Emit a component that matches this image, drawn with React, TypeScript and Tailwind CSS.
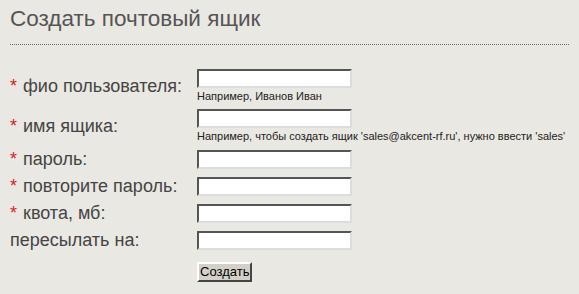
const font = { fontFamily: '"Liberation Sans", Tahoma, Arial, sans-serif' }

function Row({ label, req, hint }: { label: string; req?: boolean; hint?: string }) {
  return (
    <div className={`flex items-center ${hint ? 'mb-[6px]' : 'mb-[7px]'}`}>
      <div className="w-[187px] shrink-0 text-[18px] leading-[20px] text-[#444] whitespace-nowrap">
        {req && <span className="text-[#d22] mr-[6px]">*</span>}
        {label}
      </div>
      <div>
        <input
          type="text"
          className="block w-[155px] h-[19px] bg-white border-2 border-t-[#555] border-l-[#555] border-b-[#ddd] border-r-[#ddd] outline-none"
        />
        {hint && <div className="text-[11px] leading-[13px] mt-[2px] text-[#222] whitespace-nowrap">{hint}</div>}
      </div>
    </div>
  )
}

export default function App() {
  return (
    <div className="w-[579px] h-[294px] bg-[#eae8e3] px-[10px] pt-[5px] overflow-hidden" style={font}>
      <h1 className="text-[22.5px] text-[#555] leading-[28px]">Создать почтовый ящик</h1>
      <div className="border-b border-dotted border-[#666] mt-[11px] mb-[24px]" />
      <Row label="фио пользователя:" req hint="Например, Иванов Иван" />
      <Row label="имя ящика:" req hint="Например, чтобы создать ящик 'sales@akcent-rf.ru', нужно ввести 'sales'" />
      <Row label="пароль:" req />
      <Row label="повторите пароль:" req />
      <Row label="квота, мб:" req />
      <Row label="пересылать на:" />
      <div className="pl-[187px] mt-[9px]">
        <button className="text-[13px] text-black bg-[#d4d0c8] border-2 border-t-[#fff] border-l-[#fff] border-b-[#444] border-r-[#444] px-[1px] h-[20px] leading-[14px]">
          Создать
        </button>
      </div>
    </div>
  )
}
